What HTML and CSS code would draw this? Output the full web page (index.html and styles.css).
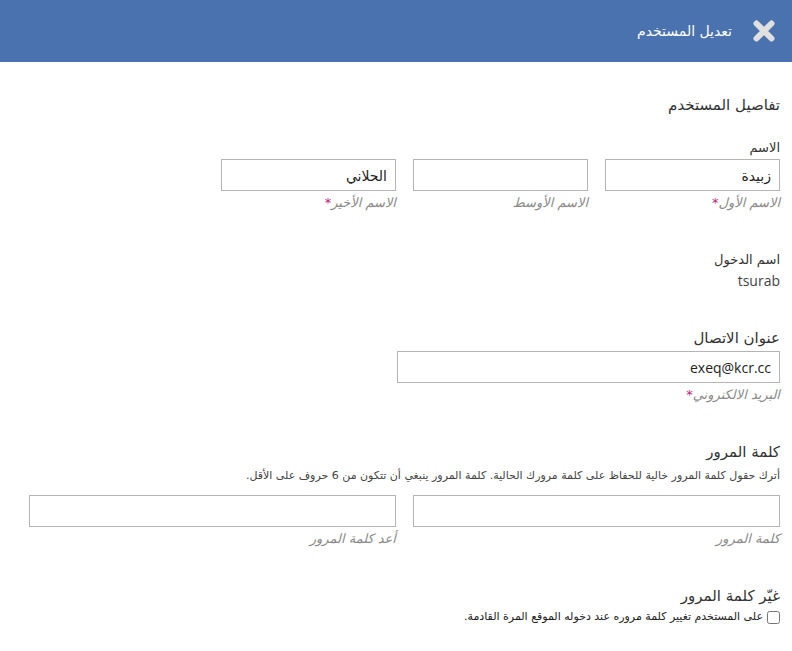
FILE: index.html
```html
<!DOCTYPE html>
<html lang="ar" dir="rtl">
<head>
<meta charset="utf-8">
<link rel="stylesheet" href="styles.css">
</head>
<body>
<header class="header">
  <svg class="close" width="24" height="24" viewBox="0 0 24 24"><path d="M4.5 4.5L19.5 19.5M19.5 4.5L4.5 19.5" stroke="#e0e0e0" stroke-width="6" stroke-linecap="round"/></svg>
  <h1 class="title">تعديل المستخدم</h1>
</header>
<main class="content">
  <h2 class="section-title">تفاصيل المستخدم</h2>

  <section class="group name-group">
    <div class="label">الاسم</div>
    <div class="row three">
      <div class="field">
        <input class="input" type="text" value="زبيدة">
        <div class="hint">الاسم الأول<span class="req">*</span></div>
      </div>
      <div class="field">
        <input class="input" type="text" value="">
        <div class="hint">الاسم الأوسط</div>
      </div>
      <div class="field">
        <input class="input" type="text" value="الحلاني">
        <div class="hint">الاسم الأخير<span class="req">*</span></div>
      </div>
    </div>
  </section>

  <section class="group login-group">
    <div class="label">اسم الدخول</div>
    <div class="value">tsurab</div>
  </section>

  <section class="group contact-group">
    <div class="label big">عنوان الاتصال</div>
    <div class="field email">
      <input class="input ltr" type="text" value="exeq@kcr.cc" dir="ltr">
      <div class="hint">البريد الالكتروني<span class="req">*</span></div>
    </div>
  </section>

  <section class="group password-group">
    <div class="label big">كلمة المرور</div>
    <div class="desc">أترك حقول كلمة المرور خالية للحفاظ على كلمة مرورك الحالية. كلمة المرور ينبغي أن تتكون من 6 حروف على الأقل.</div>
    <div class="row two">
      <div class="field">
        <input class="input" type="password" value="">
        <div class="hint">كلمة المرور</div>
      </div>
      <div class="field">
        <input class="input" type="password" value="">
        <div class="hint">أعد كلمة المرور</div>
      </div>
    </div>
  </section>

  <section class="group change-group">
    <div class="label big">غيّر كلمة المرور</div>
    <label class="check"><input type="checkbox" class="checkbox"><span>على المستخدم تغيير كلمة مروره عند دخوله الموقع المرة القادمة.</span></label>
  </section>
</main>
</body>
</html>
```
FILE: styles.css
```css
* { box-sizing: border-box; }
html, body { margin: 0; padding: 0; background: #fff; }
body {
  font-family: "Open Sans", "DejaVu Sans", sans-serif;
  color: #333;
  font-size: 13px;
  width: 792px;
  height: 651px;
  overflow: hidden;
}
.header {
  height: 62px;
  background: #4a72ae;
  display: flex;
  align-items: center;
  padding-right: 16px;
  gap: 20px;
}
.close { display: block; flex: none; }
.title {
  margin: 0;
  color: #fff;
  font-size: 14px;
  font-weight: normal;
  font-family: "DejaVu Sans", sans-serif;
}
.content {
  padding: 33px 12px 0 12px;
}
.section-title {
  margin: 0 0 24px 0;
  font-size: 15px;
  font-weight: normal;
  line-height: 20px;
  color: #333;
  font-family: "DejaVu Sans", sans-serif;
}
.label {
  font-size: 13px;
  line-height: 18px;
  color: #333;
  font-family: "DejaVu Sans", sans-serif;
  margin-bottom: 2px;
}
.label.big { font-size: 15px; line-height: 20px; margin-bottom: 3px; }
.name-group { margin-bottom: 40px; }
.login-group { margin-bottom: 37px; }
.contact-group { margin-bottom: 39px; }
.password-group { margin-bottom: 39px; }
.value { font-size: 14px; line-height: 20px; color: #444; margin-top: 0; }
.row { display: flex; gap: 17px; }
.row.three .field { width: 175px; }
.row.two .field { width: 367px; }
.field.email { width: 383px; }
.input {
  display: block;
  width: 100%;
  height: 32px;
  border: 1px solid #b5b5b5;
  padding: 0 8px;
  font-family: "Open Sans", "DejaVu Sans", sans-serif;
  font-size: 14px;
  color: #222;
  background: #fff;
  outline: none;
  border-radius: 0;
  text-align: right;
}
.hint {
  margin-top: 4px;
  font-size: 13px;
  line-height: 16px;
  color: #8a8a8a;
  font-style: italic;
  font-family: "DejaVu Sans", sans-serif;
}
.req { color: #c0237a; font-style: normal; }
.desc {
  font-size: 11px;
  line-height: 16px;
  color: #444;
  margin: 6px 0 11px 0;
  font-family: "DejaVu Sans", sans-serif;
}
.check {
  display: flex;
  align-items: center;
  gap: 4px;
  font-size: 11px;
  line-height: 16px;
  color: #222;
  font-family: "DejaVu Sans", sans-serif;
}
.checkbox { margin: 0; width: 13px; height: 13px; }
```
